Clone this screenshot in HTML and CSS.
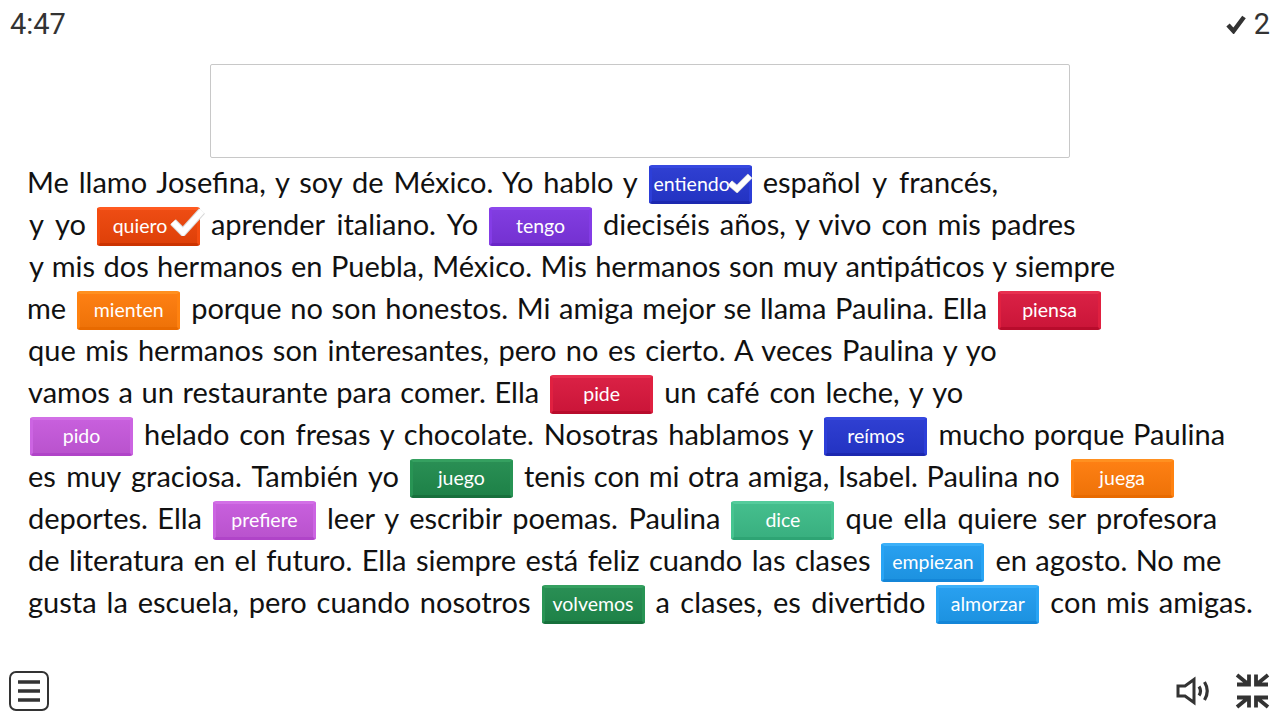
FILE: index.html
```html
<!DOCTYPE html>
<html lang="en">
<head>
  <meta charset="UTF-8">
  <meta name="viewport" content="width=device-width, initial-scale=1.0">
  <title>Josefina</title>
  <link rel="stylesheet" href="styles.css">
</head>
<body>
  <div class="screen">
    <div class="top-bar">
      <span class="timer">4:47</span>
      <span class="score">
        <svg class="score-check" viewBox="0 0 20 20" width="20" height="20"><path d="M2 11 L7.500 17 L18 3" fill="none" stroke="#333" stroke-width="4.500"/></svg>
        2
      </span>
    </div>

    <div class="answer-box"></div>

    <div class="story">
      <div class="line l1"><span class="w25">Me llamo Josefina, y soy de México. Yo hablo y</span><span class="chip blue checked">entiendo<svg class="tick tick-small" viewBox="0 0 26 20"><path d="M3 10 L10 16 L23 3" fill="none" stroke="#d8d8d8" stroke-width="6.500"/><path d="M3 10 L10 16 L23 3" fill="none" stroke="#fff" stroke-width="5"/></svg></span><span class="w5">español y francés,</span></div>
      <div class="line l2"><span class="w5">y yo</span><span class="chip red-orange checked">quiero<svg class="tick tick-big" viewBox="0 0 35 28"><path d="M3 14 L13 24 L32 3" fill="none" stroke="#d8d8d8" stroke-width="8"/><path d="M3 14 L13 24 L32 3" fill="none" stroke="#fff" stroke-width="6"/></svg></span><span class="w45">aprender italiano. Yo</span><span class="chip purple">tengo</span><span class="w25">dieciséis años, y vivo con mis padres</span></div>
      <div class="line l3"><span class="w1">y mis dos hermanos en Puebla, México. Mis hermanos son muy antipáticos y siempre</span></div>
      <div class="line l4"><span>me</span><span class="chip orange">mienten</span><span class="w12">porque no son honestos. Mi amiga mejor se llama Paulina. Ella</span><span class="chip red">piensa</span></div>
      <div class="line l5"><span class="w2">que mis hermanos son interesantes, pero no es cierto. A veces Paulina y yo</span></div>
      <div class="line l6"><span class="w12">vamos a un restaurante para comer. Ella</span><span class="chip red">pide</span><span class="w25">un café con leche, y yo</span></div>
      <div class="line l7"><span class="chip orchid first">pido</span><span class="w25">helado con fresas y chocolate. Nosotras hablamos y</span><span class="chip blue">reímos</span><span class="w15">mucho porque Paulina</span></div>
      <div class="line l8"><span class="w3">es muy graciosa. También yo</span><span class="chip green">juego</span><span class="w12">tenis con mi otra amiga, Isabel. Paulina no</span><span class="chip orange">juega</span></div>
      <div class="line l9"><span class="w2">deportes. Ella</span><span class="chip orchid">prefiere</span><span class="w32">leer y escribir poemas. Paulina</span><span class="chip teal">dice</span><span class="w3">que ella quiere ser profesora</span></div>
      <div class="line l10"><span class="w2">de literatura en el futuro. Ella siempre está feliz cuando las clases</span><span class="chip sky">empiezan</span><span class="w1">en agosto. No me</span></div>
      <div class="line l11"><span class="w25">gusta la escuela, pero cuando nosotros</span><span class="chip green">volvemos</span><span class="w3">a clases, es divertido</span><span class="chip sky">almorzar</span><span class="w2">con mis amigas.</span></div>
    </div>

    <div class="bottom-bar">
      <svg class="menu-icon" viewBox="0 0 40 40" width="40" height="40">
        <rect x="1" y="1" width="38" height="38" rx="6" fill="none" stroke="#333" stroke-width="2"/>
        <path d="M9 11 H31 M9 20 H31 M9 29 H31" stroke="#333" stroke-width="3.400"/>
      </svg>
      <div class="bottom-right">
        <svg viewBox="0 0 36 36" width="36" height="36">
          <path d="M2 13 H9 L18 6.500 V29.500 L9 23 H2 Z" fill="none" stroke="#333" stroke-width="3"/>
          <path d="M23 13.500 Q26 18 23 22.500 M28.500 9 Q34 18 28.500 27" fill="none" stroke="#333" stroke-width="3.200"/>
        </svg>
        <svg viewBox="0 0 36 36" width="36" height="36">
          <path d="M15 1.500 V11.500 H3 M3 2 L14 11 M22 1.500 V11.500 H34 M34 2 L23 11 M15 34.500 V24.500 H3 M3 34 L14 25 M22 34.500 V24.500 H34 M34 34 L23 25" fill="none" stroke="#333" stroke-width="3.800"/>
        </svg>
      </div>
    </div>
  </div>
</body>
</html>
```

FILE: styles.css
```css
* {
  box-sizing: border-box;
}
html, body {
  margin: 0;
  padding: 0;
}
body {
  font-family: Lato, "Open Sans", sans-serif;
  background-color: #fff;
  color: #111;
}
.screen {
  width: 1280px;
  height: 720px;
  display: flex;
  flex-direction: column;
  overflow: hidden;
}
.top-bar {
  height: 48px;
  padding: 0 10px;
  display: flex;
  justify-content: space-between;
  align-items: center;
  font-family: Roboto, sans-serif;
  font-size: 29px;
  color: #333;
}
.score {
  display: flex;
  align-items: center;
  gap: 8px;
}
.answer-box {
  width: 860px;
  height: 94px;
  margin: 16px 0 0 210px;
  border: 1px solid #c8c8c8;
  border-radius: 2px;
}
.story {
  margin-top: 5px;
  flex: 1;
}
.line {
  height: 42px;
  display: flex;
  align-items: center;
  white-space: pre;
  font-size: 29px;
}
.line > span:not(.chip) {
  margin-bottom: 6px;
}
.l1, .l4 { padding-left: 27px; }
.l2, .l3 { padding-left: 29px; }
.l5, .l6, .l8, .l9, .l10, .l11 { padding-left: 28px; }
.l7 { padding-left: 30px; }
.w1 { word-spacing: 1px; }
.w12 { word-spacing: 1.2px; }
.w15 { word-spacing: 1.5px; }
.w2 { word-spacing: 2px; }
.w25 { word-spacing: 2.5px; }
.w3 { word-spacing: 3px; }
.w32 { word-spacing: 3.2px; }
.w45 { word-spacing: 4.5px; }
.w5 { word-spacing: 5px; }
.chip {
  position: relative;
  flex: none;
  width: 103px;
  height: 39px;
  margin: 0 11px;
  padding-bottom: 2px;
  display: flex;
  align-items: center;
  justify-content: center;
  font-size: 19.5px;
  color: #fff;
  border-radius: 3px;
  border: 3px solid transparent;
  background-image: linear-gradient(rgba(255, 255, 255, 0.05), rgba(0, 0, 0, 0.07));
  background-origin: border-box;
}
.chip.first {
  margin-left: 0;
}
.chip.checked {
  padding-right: 17px;
}
.tick {
  position: absolute;
}
.tick-small {
  right: -4px;
  top: 5px;
  width: 26px;
  height: 20px;
}
.tick-big {
  right: -8px;
  top: -2px;
  width: 35px;
  height: 28px;
}
.blue { background-color: #2536d0; border-color: #3648e0 #2c3ed8 #1c28b0; }
.red-orange { background-color: #ee4408; border-color: #ff5a20 #f44c10 #cc3300; }
.purple { background-color: #7c34e0; border-color: #8c48ec #843ce6 #6a26c8; }
.orange { background-color: #ff7a08; border-color: #ff9020 #ff8210 #e86a00; }
.red { background-color: #d9163c; border-color: #e83050 #e02040 #b80c2c; }
.orchid { background-color: #c658dc; border-color: #d270e6 #cc64e2 #b044c8; }
.green { background-color: #1f8a4c; border-color: #35a060 #289454 #17703c; }
.teal { background-color: #3cbc88; border-color: #55cc9c #46c490 #2ea474; }
.sky { background-color: #1e9cf0; border-color: #3cb0f8 #28a4f4 #1486d8; }
.bottom-bar {
  height: 48px;
  margin-bottom: 5px;
  padding: 0 10px 0 9px;
  display: flex;
  justify-content: space-between;
  align-items: center;
}
.bottom-right {
  display: flex;
  align-items: center;
  gap: 22px;
}
```
